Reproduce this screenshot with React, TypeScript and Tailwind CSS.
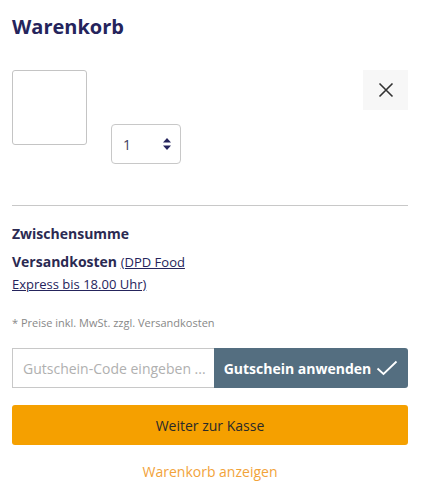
import React from "react";

export default function App() {
  return (
    <div className="w-[423px] h-[498px] bg-white pl-3 pr-[15px] pt-[13px]" style={{ fontFamily: '"Open Sans", sans-serif' }}>
      <h1 className="text-[20px] font-bold text-[#25245c] leading-[28px]">Warenkorb</h1>
      <div className="mt-[29px] flex items-start justify-between">
        <div className="flex items-start">
          <div className="w-[75px] h-[75px] border border-[#c4c4c4] rounded-[3px]" />
          <div className="ml-[24px] mt-[54px] w-[70px] h-[40px] border border-[#c8c8c8] rounded-[4px] flex items-center justify-between pl-[11px] pr-[8px]">
            <span className="text-[14px] text-[#404060]">1</span>
            <svg width="10" height="14" viewBox="0 0 10 14">
              <path d="M5 1 L9 5.5 H1 Z" fill="#25245c" />
              <path d="M5 13 L9 8.5 H1 Z" fill="#25245c" />
            </svg>
          </div>
        </div>
        <button className="w-[45px] h-[40px] bg-[#f7f7f7] flex items-center justify-center">
          <svg width="16" height="16" viewBox="0 0 16 16">
            <path d="M1.5 1.5 L14.5 14.5 M14.5 1.5 L1.5 14.5" stroke="#333" strokeWidth="1.6" />
          </svg>
        </button>
      </div>
      <div className="mt-[41px] border-t border-[#c8c8c8]" />
      <div className="grid grid-cols-2 mt-[18px]">
        <div className="text-[14px] text-[#2b2a52]">
          <div className="font-bold leading-[20px]">Zwischensumme</div>
          <div className="mt-[7px] leading-[21px]">
            <span className="font-bold text-[14px]">Versandkosten</span>{" "}
            <a className="underline text-[13px] text-[#25245c]">(DPD Food Express bis 18.00 Uhr)</a>
          </div>
        </div>
        <div />
      </div>
      <div className="mt-[20px] text-[11px] text-[#888] leading-[16px]">* Preise inkl. MwSt. zzgl. Versandkosten</div>
      <div className="mt-[17px] flex h-[40px]">
        <input
          className="w-[202px] h-full border border-[#c8c8c8] border-r-0 pl-[10px] pr-[1px] text-[14px] placeholder:text-[#b0b0b0] outline-none"
          placeholder="Gutschein-Code eingeben ..."
        />
        <button className="flex-1 h-full bg-[#546e80] rounded-r-[3px] text-white font-bold text-[14px] flex items-center justify-center gap-[5px]">
          Gutschein anwenden
          <svg width="22" height="16" viewBox="0 0 22 16">
            <path d="M1.5 8.5 L7.5 14 L20.5 1.5" stroke="#fff" strokeWidth="1.8" fill="none" />
          </svg>
        </button>
      </div>
      <button className="mt-[17px] w-full h-[40px] bg-[#f5a000] rounded-[3px] text-[14px] font-medium text-[#2a2a2a] flex items-center justify-center">
        Weiter zur Kasse
      </button>
      <div className="mt-[16px] text-center text-[14px] font-medium text-[#f2a33a]">Warenkorb anzeigen</div>
    </div>
  );
}
